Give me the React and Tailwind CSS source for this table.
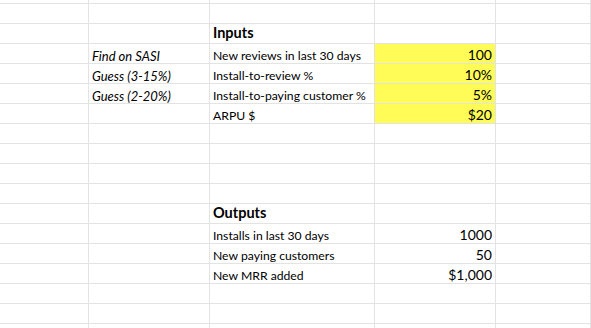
import React from 'react';

const cols = ['w-[89px]', 'w-[121px]', 'w-[165px]', 'w-[121px]', 'flex-1'];

const rows = [
  {},
  {},
  { c: { text: 'Inputs', bold: true } },
  { b: 'Find on SASI', c: 'New reviews in last 30 days', d: '100', yellow: true },
  { b: 'Guess (3-15%)', c: 'Install-to-review %', d: '10%', yellow: true },
  { b: 'Guess (2-20%)', c: 'Install-to-paying customer %', d: '5%', yellow: true },
  { c: 'ARPU $', d: '$20', yellow: true },
  {},
  {},
  {},
  {},
  { c: { text: 'Outputs', bold: true } },
  { c: 'Installs in last 30 days', d: '1000' },
  { c: 'New paying customers', d: '50' },
  { c: 'New MRR added', d: '$1,000' },
  {},
  {},
  {},
];

function Cell({ width, height, children, className = '' }) {
  return (
    <div
      className={`${width} ${height} shrink-0 border-r border-b border-[#e3e3e3] flex items-end px-[3px] whitespace-nowrap overflow-visible leading-[14px] ${className}`}
    >
      {children}
    </div>
  );
}

export default function App() {
  return (
    <div
      className="w-[591px] h-[328px] overflow-hidden bg-white text-black text-[12.2px]"
      style={{ fontFamily: 'Lato, "Open Sans", sans-serif' }}
    >
      {rows.map((r, i) => {
        const h = i === 0 ? 'h-[4px]' : 'h-[20px]';
        const c = typeof r.c === 'object' ? r.c : { text: r.c };
        return (
          <div key={i} className="flex">
            <Cell width={cols[0]} height={h} />
            <Cell width={cols[1]} height={h} className="italic text-[13px]">
              {r.b}
            </Cell>
            <Cell
              width={cols[2]}
              height={h}
              className={c.bold ? 'font-bold text-[14.5px] pb-[3px]' : ''}
            >
              {c.text}
            </Cell>
            <Cell
              width={cols[3]}
              height={h}
              className={`justify-end text-[14px] pb-[1px] ${r.yellow ? 'bg-[#fffc58]' : ''}`}
            >
              {r.d}
            </Cell>
            <Cell width={cols[4]} height={h} />
          </div>
        );
      })}
    </div>
  );
}
